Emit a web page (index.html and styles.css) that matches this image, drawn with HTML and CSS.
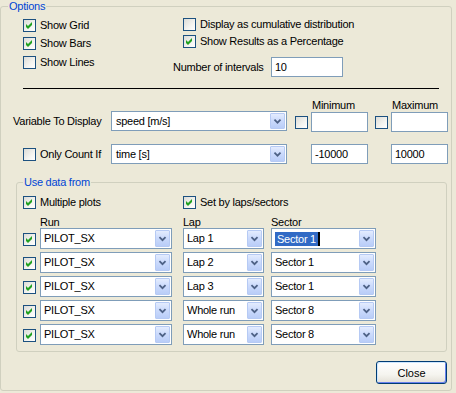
FILE: index.html
```html
<!DOCTYPE html>
<html>
<head>
<meta charset="utf-8">
<link rel="stylesheet" href="styles.css">
</head>
<body>
<fieldset class="group options">
  <legend class="group-title">Options</legend>
  <div class="opt-top">
    <div class="col-left">
      <div class="cb"><span class="box"><svg viewBox="0 0 11 11"><polygon points="2,4 4,6 8,2 8,5 4,9 2,7"/></svg></span><span class="cb-label">Show Grid</span></div>
      <div class="cb gap1"><span class="box"><svg viewBox="0 0 11 11"><polygon points="2,4 4,6 8,2 8,5 4,9 2,7"/></svg></span><span class="cb-label">Show Bars</span></div>
      <div class="cb gap2"><span class="box"></span><span class="cb-label">Show Lines</span></div>
    </div>
    <div class="col-right">
      <div class="cb indent"><span class="box"></span><span class="cb-label">Display as cumulative distribution</span></div>
      <div class="cb indent"><span class="box"><svg viewBox="0 0 11 11"><polygon points="2,4 4,6 8,2 8,5 4,9 2,7"/></svg></span><span class="cb-label">Show Results as a Percentage</span></div>
      <div class="intervals">
        <span class="intervals-label">Number of intervals</span>
        <div class="field w72">10</div>
      </div>
    </div>
  </div>
  <div class="separator"></div>
  <div class="var-grid">
    <span class="hdr hdr-min">Minimum</span>
    <span class="hdr hdr-max">Maximum</span>

    <span class="row-label r1">Variable To Display</span>
    <div class="select c-sel r1"><span class="value">speed [m/s]</span><span class="drop"><svg viewBox="0 0 15 16"><polyline points="4,6.5 7.5,10 11,6.5"/></svg></span></div>
    <span class="box c-cb1 r1 mid"></span>
    <div class="field c-in1 r1 lower"></div>
    <span class="box c-cb2 r1 mid"></span>
    <div class="field c-in2 r1 lower"></div>

    <div class="cb r2 c-lbl pad22"><span class="box"></span><span class="cb-label">Only Count If</span></div>
    <div class="select c-sel r2"><span class="value">time [s]</span><span class="drop"><svg viewBox="0 0 15 16"><polyline points="4,6.5 7.5,10 11,6.5"/></svg></span></div>
    <div class="field c-in1 r2">-10000</div>
    <div class="field c-in2 r2">10000</div>
  </div>

  <fieldset class="group data">
    <legend class="group-title">Use data from</legend>
    <div class="data-top">
      <div class="cb w160"><span class="box"><svg viewBox="0 0 11 11"><polygon points="2,4 4,6 8,2 8,5 4,9 2,7"/></svg></span><span class="cb-label">Multiple plots</span></div>
      <div class="cb"><span class="box"><svg viewBox="0 0 11 11"><polygon points="2,4 4,6 8,2 8,5 4,9 2,7"/></svg></span><span class="cb-label">Set by laps/sectors</span></div>
    </div>
    <div class="runs-hdr">
      <span class="c-run">Run</span>
      <span class="c-lap">Lap</span>
      <span class="c-sec">Sector</span>
    </div>
    <div class="runs">
      <span class="box c-chk"><svg viewBox="0 0 11 11"><polygon points="2,4 4,6 8,2 8,5 4,9 2,7"/></svg></span>
      <div class="select tall c-run"><span class="value">PILOT_SX</span><span class="drop"><svg viewBox="0 0 15 17"><polyline points="4,7 7.5,10.5 11,7"/></svg></span></div>
      <div class="select tall c-lap"><span class="value">Lap 1</span><span class="drop"><svg viewBox="0 0 15 17"><polyline points="4,7 7.5,10.5 11,7"/></svg></span></div>
      <div class="select tall c-sec"><span class="value sel-wrap"><span class="selected">Sector 1</span><span class="caret"></span></span><span class="drop"><svg viewBox="0 0 15 17"><polyline points="4,7 7.5,10.5 11,7"/></svg></span></div>

      <span class="box c-chk"><svg viewBox="0 0 11 11"><polygon points="2,4 4,6 8,2 8,5 4,9 2,7"/></svg></span>
      <div class="select tall c-run"><span class="value">PILOT_SX</span><span class="drop"><svg viewBox="0 0 15 17"><polyline points="4,7 7.5,10.5 11,7"/></svg></span></div>
      <div class="select tall c-lap"><span class="value">Lap 2</span><span class="drop"><svg viewBox="0 0 15 17"><polyline points="4,7 7.5,10.5 11,7"/></svg></span></div>
      <div class="select tall c-sec"><span class="value">Sector 1</span><span class="drop"><svg viewBox="0 0 15 17"><polyline points="4,7 7.5,10.5 11,7"/></svg></span></div>

      <span class="box c-chk"><svg viewBox="0 0 11 11"><polygon points="2,4 4,6 8,2 8,5 4,9 2,7"/></svg></span>
      <div class="select tall c-run"><span class="value">PILOT_SX</span><span class="drop"><svg viewBox="0 0 15 17"><polyline points="4,7 7.5,10.5 11,7"/></svg></span></div>
      <div class="select tall c-lap"><span class="value">Lap 3</span><span class="drop"><svg viewBox="0 0 15 17"><polyline points="4,7 7.5,10.5 11,7"/></svg></span></div>
      <div class="select tall c-sec"><span class="value">Sector 1</span><span class="drop"><svg viewBox="0 0 15 17"><polyline points="4,7 7.5,10.5 11,7"/></svg></span></div>

      <span class="box c-chk"><svg viewBox="0 0 11 11"><polygon points="2,4 4,6 8,2 8,5 4,9 2,7"/></svg></span>
      <div class="select tall c-run"><span class="value">PILOT_SX</span><span class="drop"><svg viewBox="0 0 15 17"><polyline points="4,7 7.5,10.5 11,7"/></svg></span></div>
      <div class="select tall c-lap"><span class="value">Whole run</span><span class="drop"><svg viewBox="0 0 15 17"><polyline points="4,7 7.5,10.5 11,7"/></svg></span></div>
      <div class="select tall c-sec"><span class="value">Sector 8</span><span class="drop"><svg viewBox="0 0 15 17"><polyline points="4,7 7.5,10.5 11,7"/></svg></span></div>

      <span class="box c-chk"><svg viewBox="0 0 11 11"><polygon points="2,4 4,6 8,2 8,5 4,9 2,7"/></svg></span>
      <div class="select tall c-run"><span class="value">PILOT_SX</span><span class="drop"><svg viewBox="0 0 15 17"><polyline points="4,7 7.5,10.5 11,7"/></svg></span></div>
      <div class="select tall c-lap"><span class="value">Whole run</span><span class="drop"><svg viewBox="0 0 15 17"><polyline points="4,7 7.5,10.5 11,7"/></svg></span></div>
      <div class="select tall c-sec"><span class="value">Sector 8</span><span class="drop"><svg viewBox="0 0 15 17"><polyline points="4,7 7.5,10.5 11,7"/></svg></span></div>
    </div>
  </fieldset>

  <div class="actions">
    <button class="btn">Close</button>
  </div>
</fieldset>
</body>
</html>
```

FILE: styles.css
```css
* { box-sizing: border-box; }
html, body {
  margin: 0;
  padding: 0;
  width: 456px;
  height: 393px;
  overflow: hidden;
  background: #ECE9D8;
}
body {
  font-family: "Liberation Sans", Arial, sans-serif;
  font-size: 11px;
  line-height: 13px;
  letter-spacing: -0.25px;
  color: #000;
}

/* group boxes */
.group {
  margin: 0;
  padding: 0;
  min-width: 0;
  border: 1px solid #D0D0BF;
  border-radius: 3px;
}
.group-title {
  padding: 0 1px;
  margin-left: 7px;
  color: #0046D5;
  font-size: 11px;
  line-height: 13px;
}
.options {
  width: 452px;
  height: 391px;
  padding-bottom: 6px;
}

/* checkbox */
.cb {
  display: flex;
  align-items: center;
  height: 17px;
  white-space: nowrap;
}
.cb-label { margin-left: 4px; }
.box {
  width: 13px;
  height: 13px;
  flex: none;
  border: 1px solid #1C5180;
  background: linear-gradient(135deg, #DCDCD7 0%, #F4F4F0 60%, #FFFFFF 100%);
  display: block;
}
.box svg {
  display: block;
  width: 11px;
  height: 11px;
}
.box polygon { fill: #21A121; }

/* top options area */
.opt-top {
  display: flex;
}
.col-left {
  margin-left: 22px;
  width: 150px;
  padding-top: 4px;
}
.gap1 { margin-top: 1px; }
.gap2 { margin-top: 2px; }
.col-right {
  padding-top: 3px;
}
.indent { margin-left: 10px; }
.intervals {
  display: flex;
  align-items: center;
  margin-top: 7px;
  height: 20px;
}
.intervals-label {
  width: 98px;
  white-space: nowrap;
}

/* fields */
.field {
  border: 1px solid #7F9DB9;
  background: #fff;
  height: 20px;
  padding-left: 3px;
  line-height: 18px;
  white-space: nowrap;
}
.w72 { width: 72px; }

.separator {
  margin: 11px 0 0 22px;
  width: 416px;
  height: 1px;
  background: #000;
}

/* variable grid */
.var-grid {
  margin-top: 10px;
  display: grid;
  grid-template-columns: 110px 176px 8px 13px 3px 57px 7px 13px 3px 57px;
  grid-template-rows: 12px 21px 32px;
}
.hdr { grid-row: 1; line-height: 12px; white-space: nowrap; }
.hdr-min { grid-column: 6; padding-left: 1px; }
.hdr-max { grid-column: 10; padding-left: 1px; }
.r1 { grid-row: 2; }
.r2 { grid-row: 3; margin-top: 12px; }
.row-label {
  grid-column: 1;
  padding-left: 12px;
  align-self: center;
  white-space: nowrap;
  margin-top: -1px;
}
.c-sel { grid-column: 2; }
.c-cb1 { grid-column: 4; }
.c-in1 { grid-column: 6; }
.c-cb2 { grid-column: 8; }
.c-in2 { grid-column: 10; }
.c-lbl { grid-column: 1 / 3; }
.pad22 { padding-left: 22px; height: 20px; }
.mid { align-self: center; margin-top: 1px; }
.lower { margin-top: 1px; }

/* select / combobox */
.select {
  display: flex;
  align-items: stretch;
  height: 20px;
  border: 1px solid #7F9DB9;
  background: #fff;
  padding: 1px;
}
.select.tall { height: 21px; }
.select .value {
  flex: 1;
  display: flex;
  align-items: center;
  padding-left: 3px;
  white-space: nowrap;
  overflow: hidden;
}
.drop {
  flex: none;
  width: 15px;
  border: 1px solid #B6CAF4;
  border-radius: 1px;
  background: linear-gradient(to bottom, #E4ECFE 0%, #CCDBFC 45%, #B9CDF8 100%);
}
.drop svg {
  display: block;
  width: 13px;
  height: 100%;
}
.drop polyline {
  fill: none;
  stroke: #4D6185;
  stroke-width: 2;
}

.runs .select .sel-wrap { padding-left: 1px; }
.selected {
  background: #316AC5;
  color: #fff;
  padding: 1px 2px;
  line-height: 12px;
}
.caret {
  width: 2px;
  height: 14px;
  background: #000;
}

/* data group */
.data {
  margin: 12px 0 0 15px;
  width: 431px;
  padding: 0 0 6px 0;
}
.data .group-title { margin-left: 6px; }
.data-top {
  display: flex;
  padding: 5px 0 0 6px;
}
.w160 { width: 160px; }
.runs-hdr,
.runs {
  padding-left: 6px;
  display: grid;
  grid-template-columns: 13px 4px 132px 11px 81px 7px 105px;
}
.runs-hdr {
  margin-top: 6px;
  height: 11px;
  line-height: 11px;
}
.runs {
  grid-auto-rows: 21px;
  row-gap: 3px;
}
.c-chk { grid-column: 1; align-self: center; margin-top: 2px; }
.c-run { grid-column: 3; }
.c-lap { grid-column: 5; }
.c-sec { grid-column: 7; }
.runs .select .value { padding-left: 2px; }

/* buttons */
.actions {
  display: flex;
  justify-content: flex-end;
  padding-right: 4px;
  margin-top: 9px;
}
.btn {
  width: 71px;
  height: 23px;
  font-family: "Liberation Sans", Arial, sans-serif;
  font-size: 11px;
  color: #000;
  border: 1px solid #003C74;
  border-radius: 3px;
  background: linear-gradient(to bottom, #FFFFFF 0%, #F5F4EF 60%, #E3E0D6 100%);
  box-shadow: inset 1px 1px 0 #CEE7FF, inset -1px -1px 0 #6982EE;
  padding: 0;
}
```
